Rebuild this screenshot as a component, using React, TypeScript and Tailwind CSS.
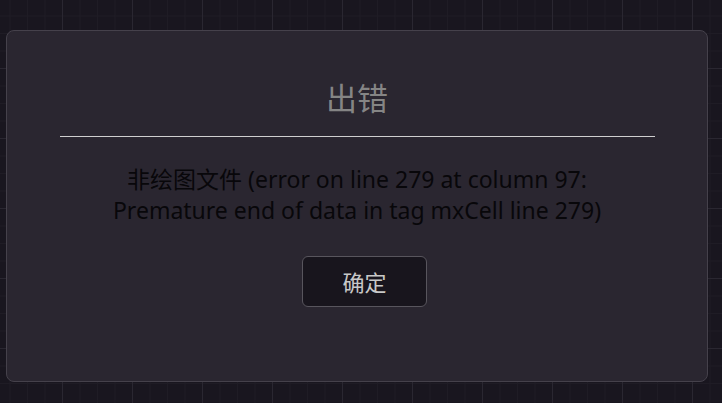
export default function App() {
  return (
    <div className="relative w-[722px] h-[403px] overflow-hidden bg-[#19161f] bg-[linear-gradient(to_right,#2a2731_1px,transparent_1px),linear-gradient(to_bottom,#2a2731_1px,transparent_1px),linear-gradient(to_right,#1f1c25_1px,transparent_1px),linear-gradient(to_bottom,#1f1c25_1px,transparent_1px)] bg-[size:70px_70px,70px_70px,17.5px_17.5px,17.5px_17.5px] bg-[position:62px_68px,62px_68px,9.5px_15.5px,9.5px_15.5px] font-['Noto_Sans','Noto_Sans_CJK_SC',sans-serif]">
      <div className="absolute left-[6px] top-[30px] w-[702px] h-[352px] rounded-[8px] border border-[#45414b] bg-[#2a2630] flex flex-col items-center">
        <div className="mt-[46px] h-[40px] leading-[40px] text-[31px] text-[#858585] font-['Noto_Sans_CJK_SC','Noto_Sans',sans-serif]">出错</div>
        <div className="mt-[19px] w-[595px] h-px bg-[#cfcfcf] self-start ml-[53px]" />
        <div className="mt-[27px] text-center text-[23px] leading-[31px] text-[#08070a]">
          <div>非绘图文件 (error on line 279 at column 97:</div>
          <div>Premature end of data in tag mxCell line 279)</div>
        </div>
        <button className="mt-[30px] ml-[15px] w-[125px] h-[51px] rounded-[6px] border border-[#58555d] bg-[#18151d] text-[22px] text-[#c8c8c8] font-['Noto_Sans_CJK_SC',sans-serif]">确定</button>
      </div>
    </div>
  );
}
